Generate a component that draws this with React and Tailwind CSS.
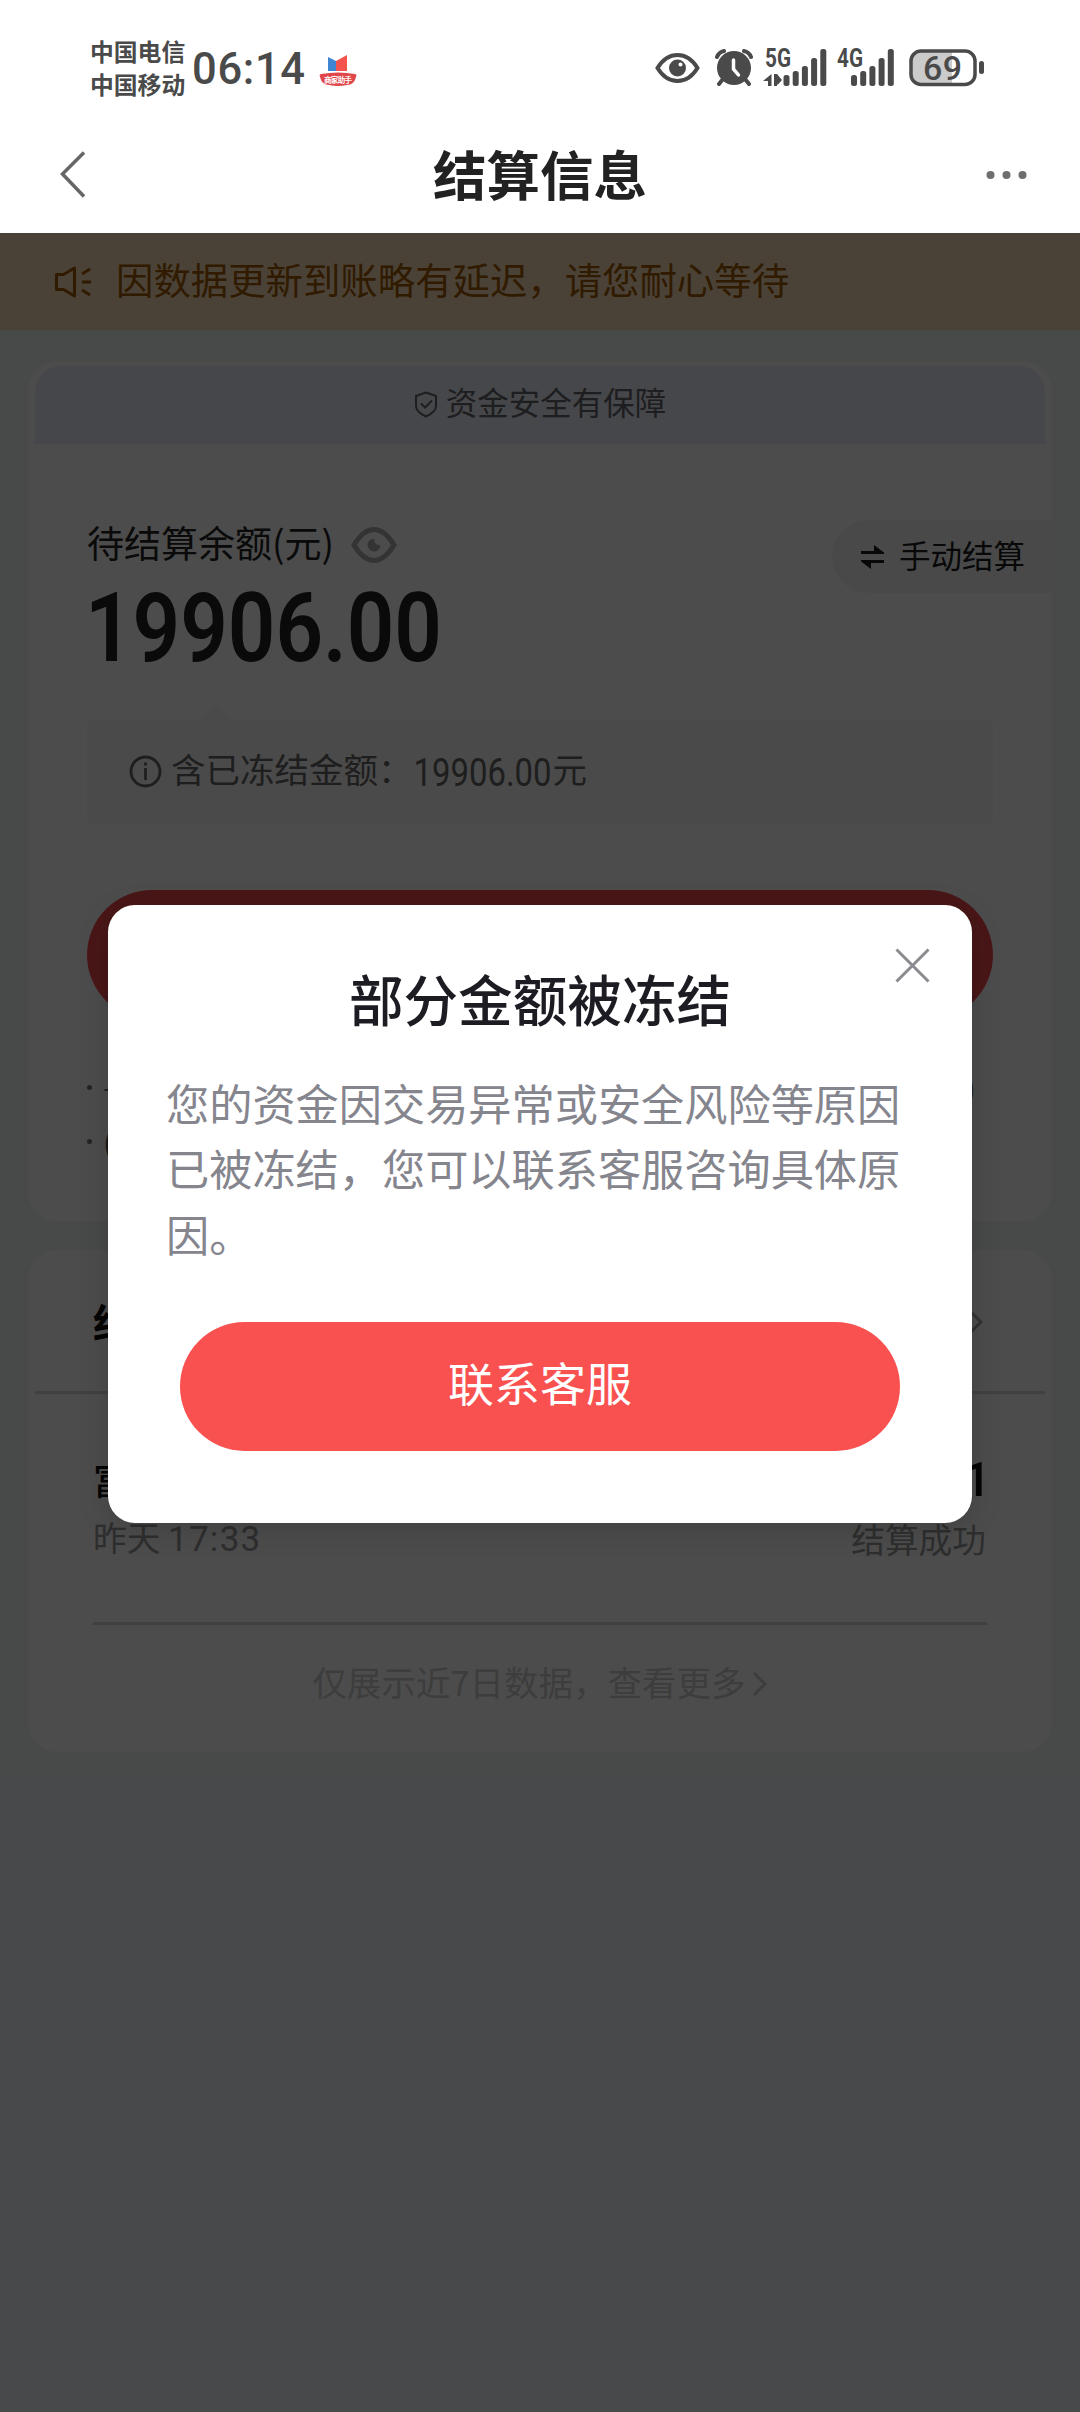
import React from 'react';

const SignalBars = ({ x }) => {
  const tops = [26, 22, 17, 9, 0];
  return tops.map((top, i) => (
    <rect key={top} x={x + i * 9.2} y={top} width="6" height={37 - top} rx="2.5" />
  ));
};

const StatusBar = () => (
  <div className="flex h-[120px] items-start justify-between pr-[94px] pl-[90px] text-[#4a4a4a]">
    <div className="flex pt-[34px]">
      <div className="w-[96px] text-[23.8px] leading-[33px] font-semibold whitespace-nowrap">
        <div>中国电信</div>
        <div>中国移动</div>
      </div>
      <svg className="mt-[11px] ml-[6px] overflow-visible" width="118" height="48" viewBox="0 0 118 48">
        <text x="0" y="39" fontSize="43.5" fontWeight="500" fill="currentColor" textLength="113" className="font-[Roboto]">
          06:14
        </text>
      </svg>
      <svg className="mt-[20px] ml-[9px]" width="38" height="34" viewBox="0 0 38 34">
        <path d="M9 3l8 4v10H9z" fill="#3f86d2" />
        <path d="M17 7l11-6v16H17z" fill="#f4524c" />
        <path d="M2 20q17-3 34 0 2 0 1 3-2 8-9 8-9 2-18 0-7 0-9-8-1-3 1-3z" fill="#e0474b" />
        <text x="5" y="28.500" fontSize="7.500" fontWeight="700" fill="#fff" textLength="28">
          商家助手
        </text>
      </svg>
    </div>

    <div className="flex pt-[49px]">
      <svg width="46" height="38" viewBox="0 0 46 38">
        <path
          d="M2.500 19C8 10 15 6 22.500 6S37 10 42.500 19C37 28 30 32 22.500 32S8 28 2.500 19z"
          fill="none"
          stroke="currentColor"
          strokeWidth="4"
        />
        <circle cx="22.500" cy="19" r="8.500" fill="currentColor" />
        <circle cx="25.500" cy="15.500" r="2" fill="#fff" />
      </svg>
      <svg className="ml-[14px]" width="38" height="38" viewBox="0 0 38 38">
        <g stroke="currentColor" strokeWidth="4" strokeLinecap="round" fill="none">
          <path d="M2 8q2-5 7-6M36 8q-2-5-7-6M8 30l-4 5M30 30l4 5" />
        </g>
        <circle cx="19" cy="19" r="17" fill="currentColor" />
        <path d="M18.500 11v9l5 6" stroke="#fff" strokeWidth="3.500" strokeLinecap="round" fill="none" />
      </svg>
      <svg className="ml-[11px] overflow-visible" width="64" height="38" viewBox="0 0 64 38" fill="currentColor">
        <text x="1" y="18" fontSize="25" fontWeight="700" textLength="26" lengthAdjust="spacingAndGlyphs" className="font-[Roboto]">
          5G
        </text>
        <path d="M7.500 25v12H4v-5H-1zM10 25h3v12h-3zM13 25l5 6-4 4.500h-1z" />
        <SignalBars x={19.5} />
      </svg>
      <svg className="ml-[9px] overflow-visible" width="60" height="38" viewBox="0 0 60 38" fill="currentColor">
        <text x="0" y="18" fontSize="25" fontWeight="700" textLength="26" lengthAdjust="spacingAndGlyphs" className="font-[Roboto]">
          4G
        </text>
        <SignalBars x={14} />
      </svg>
      <svg className="ml-[12px]" width="77" height="38" viewBox="0 0 77 38">
        <path d="M12 3h31v31H12q-9 0-9-9V12q0-9 9-9z" fill="#cbcbcb" />
        <rect x="2" y="2" width="64" height="33.500" rx="10" fill="none" stroke="currentColor" strokeWidth="3.500" />
        <rect x="70" y="12" width="5" height="13" rx="2.500" fill="currentColor" />
        <text x="14" y="31" fontSize="34" fontWeight="500" fill="currentColor" textLength="39" className="font-[Roboto]">
          69
        </text>
      </svg>
    </div>
  </div>
);

const NavBar = () => (
  <div className="flex h-[113px] items-center justify-between pr-[53px] pb-[3px] pl-[58px]">
    <svg width="30" height="50" viewBox="0 0 30 50" fill="none" stroke="#666" strokeWidth="3.500">
      <path d="M26 2.500L4.500 24 26 46.500" />
    </svg>
    <h1 className="-mt-[5px] ml-[6px] text-[53.5px] leading-none font-bold text-[#222]">结算信息</h1>
    <svg width="41" height="12" viewBox="0 0 41 12" fill="#6e6e6e">
      <circle cx="4.500" cy="6" r="4" />
      <circle cx="20.500" cy="6" r="4" />
      <circle cx="36.500" cy="6" r="4" />
    </svg>
  </div>
);

const Notice = () => (
  <div className="flex h-[97px] items-center bg-[#fadcb8] pl-[54px] text-[#a05a00]">
    <svg width="38" height="34" viewBox="0 0 38 34" fill="none" stroke="currentColor" strokeWidth="3">
      <path d="M2.500 9.500h7l11-6.500v28l-11-6.500h-7z" strokeLinejoin="round" />
      <path d="M28 17h9M28 9l8-5M28 25l8 5" />
    </svg>
    <span className="ml-[24px] pb-[4px] text-[37.4px] leading-none">因数据更新到账略有延迟，请您耐心等待</span>
  </div>
);

const BalanceCard = () => (
  <section className="h-[860px] rounded-[30px] bg-white px-[7px] pt-[5px]">
    <div className="flex h-[78px] items-center justify-center rounded-t-[26px] bg-[#eceff7] text-[31.5px] leading-none text-[#65656d]">
      <svg className="mr-2 mb-[2px]" width="24" height="27" viewBox="0 0 24 27" fill="none" stroke="currentColor" strokeWidth="2">
        <path d="M12 1.500l10 3.500v10q0 6-10 10.500Q2 21 2 15V5z" strokeLinejoin="round" />
        <path d="M7 12.500l4 4 7-7" />
      </svg>
      <span className="pb-[6px]">资金安全有保障</span>
    </div>

    <div className="flex justify-between pt-[76px] pl-[52px]">
      <div>
        <div className="flex h-[46px] items-center">
          <span className="w-[247px] pb-[2px] text-[37px] leading-none whitespace-nowrap text-[#222]">待结算余额(元)</span>
          <svg className="mt-[3px] ml-[17px]" width="46" height="38" viewBox="0 0 46 38">
            <path
              d="M3 19C9 9 16 3.500 23 3.500S37 9 43 19C37 29 30 34.500 23 34.500S9 29 3 19z"
              fill="none"
              stroke="#b0b0b0"
              strokeWidth="5"
            />
            <path d="M23 12.500a6.500 6.500 0 1 0 6.500 7q-6 0-6.500-7z" fill="#b0b0b0" />
          </svg>
        </div>
        <svg className="mt-4 overflow-visible" width="360" height="90" viewBox="0 0 360 90">
          <text
            x="-2"
            y="79"
            fontSize="97"
            fontWeight="600"
            fill="#222"
            textLength="357"
            lengthAdjust="spacingAndGlyphs"
            className="font-[Roboto]"
          >
            19906.00
          </text>
        </svg>
      </div>
      <div className="-mr-[7px] flex h-[73px] w-[220px] items-center rounded-l-[36px] bg-[#f3f5f7] pl-[29px] text-[#1c1c1c]">
        <svg width="23" height="26" viewBox="0 0 23 26" fill="currentColor">
          <path d="M0 7h13V1l10 7.500V10H0zM23 16H0v1.500L10 25v-6h13z" />
        </svg>
        <span className="ml-[15px] pb-[3px] text-[31.5px] leading-none">手动结算</span>
      </div>
    </div>

    <div className="mx-[52px] mt-[32px]">
      <svg className="ml-[114px]" width="30" height="15" viewBox="0 0 30 15">
        <path d="M0 15L15 0l15 15z" fill="#f9f9f9" />
      </svg>
      <div className="flex h-[105px] items-center rounded-lg bg-[#f8f8f8] pl-[42px] text-[34.5px] leading-none text-[#666]">
        <svg width="33" height="33" viewBox="0 0 33 33" fill="none" stroke="currentColor" strokeWidth="2.800">
          <circle cx="16.500" cy="16.500" r="14.500" />
          <path d="M16.500 13v12M16.500 7.500v3" />
        </svg>
        <span className="ml-[9px] pb-[6px]">含已冻结金额：</span>
        <svg className="overflow-visible" width="140" height="40" viewBox="0 0 140 40">
          <text
            x="0.500"
            y="33.500"
            fontSize="38"
            fontWeight="400"
            fill="currentColor"
            textLength="138"
            lengthAdjust="spacingAndGlyphs"
            className="font-[Roboto]"
          >
            19906.00
          </text>
        </svg>
        <span className="pb-[6px]">元</span>
      </div>
      <div className="mt-[66px] h-[130px] rounded-full bg-[#f54a4c]" />
      <div className="mt-[40px] flex h-[54px] items-center text-[30px] text-[#777]">
        <span className="size-[5px] rounded-full bg-[#777]" />
        <span className="ml-[11px] pb-[4px]">-</span>
        <span className="mr-[17px] ml-auto">)</span>
      </div>
      <div className="flex h-[54px] items-center text-[30px] text-[#555]">
        <span className="size-[5px] rounded-full bg-[#777]" />
        <span className="ml-[11px]">(</span>
      </div>
    </div>
  </section>
);

const RecordsCard = () => (
  <section className="mt-[29px] h-[502px] rounded-[30px] bg-white px-[7px]">
    <div className="flex h-[144px] items-center justify-between border-b-3 border-[#dadada] pr-[62px] pl-[58px]">
      <span className="text-[40px] leading-none font-bold text-[#111]">结</span>
      <svg className="mt-[3px]" width="16" height="28" viewBox="0 0 16 28" fill="none" stroke="#aaa" strokeWidth="3">
        <path d="M2 2l12 12L2 26" />
      </svg>
    </div>
    <div className="mx-[58px] h-[231px] border-b-3 border-[#d6d6d6] pt-[58px]">
      <div className="flex items-center justify-between text-[37px] leading-[52px] font-medium text-[#111]">
        <span>富</span>
        <span className="-mr-[4px] pt-[2px] font-[Roboto] text-[49px]">1</span>
      </div>
      <div className="mt-[5px] flex items-center justify-between text-[33.7px] leading-[52px] text-[#999]">
        <span>
          昨天 <span className="font-[Roboto] text-[35px] tracking-[1.300px]">17:33</span>
        </span>
        <span className="mr-px">结算成功</span>
      </div>
    </div>
    <div className="flex h-[113px] items-center justify-center text-[34.5px] leading-none text-[#ccc]">
      <span>仅展示近7日数据，查看更多</span>
      <svg className="mt-[4px] ml-[6px]" width="16" height="28" viewBox="0 0 16 28" fill="none" stroke="currentColor" strokeWidth="3">
        <path d="M2 3l11 11L2 25" />
      </svg>
    </div>
  </section>
);

const FrozenDialog = () => (
  <div className="relative h-[618px] w-[864px] rounded-[27px] bg-white px-[58px] pt-[63px] shadow-[0_6px_30px_rgba(0,0,0,0.15)]">
    <button className="absolute top-[43px] right-[42px]">
      <svg width="35" height="35" viewBox="0 0 35 35" stroke="#8a8a90" strokeWidth="3">
        <path d="M1.500 1.500l32 32M33.500 1.500l-32 32" />
      </svg>
    </button>
    <h2 className="text-center text-[54.6px] leading-[60px] font-medium text-[#1c1c22]">部分金额被冻结</h2>
    <p className="mt-[42px] w-[750px] text-[43.2px] leading-[65.3px] text-[#85858e]">
      您的资金因交易异常或安全风险等原因
      <br />
      已被冻结，您可以联系客服咨询具体原
      <br />
      因。
    </p>
    <button className="mx-auto mt-[56px] flex h-[129px] w-[720px] items-center justify-center rounded-full bg-[#f95150] pb-[11px] text-[46px] leading-none text-white">
      联系客服
    </button>
  </div>
);

const App = () => (
  <div className="flex h-[2412px] w-[1080px] flex-col overflow-hidden bg-white font-['Noto_Sans_CJK_SC',sans-serif]">
    <StatusBar />
    <NavBar />
    <main className="relative flex-1 bg-[#f1f3f6]">
      <Notice />
      <div className="px-7 pt-[31px]">
        <BalanceCard />
        <RecordsCard />
      </div>
      <div className="absolute inset-0 flex items-start justify-center bg-black/70 pt-[672px]">
        <FrozenDialog />
      </div>
    </main>
  </div>
);

export default App;
